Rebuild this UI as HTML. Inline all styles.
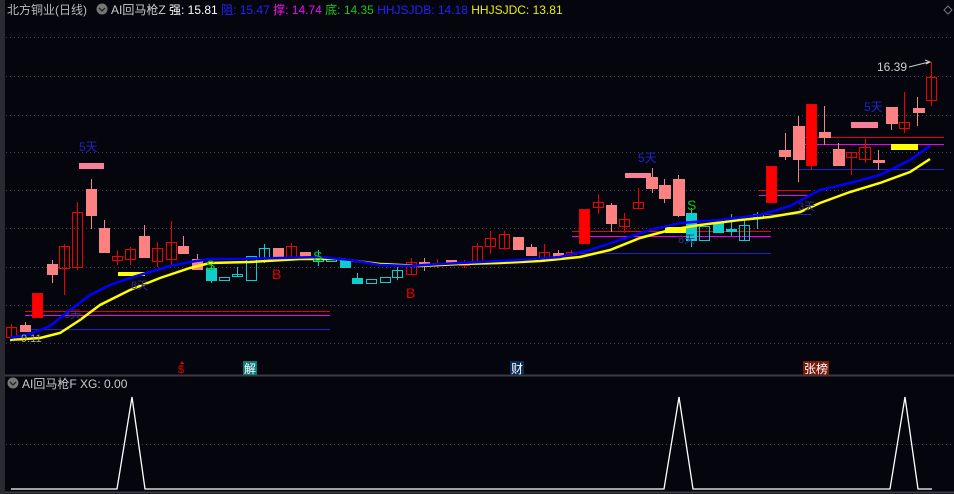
<!DOCTYPE html><html><head><meta charset="utf-8"><style>
html,body{margin:0;padding:0;background:#05050d;width:954px;height:494px;overflow:hidden}
svg{display:block}
text{font-family:"Liberation Sans","Noto Sans CJK SC",sans-serif}
</style></head><body>
<svg width="954" height="494" viewBox="0 0 954 494" xmlns="http://www.w3.org/2000/svg">
<rect width="954" height="494" fill="#05050d"/>
<rect x="0" y="0" width="5" height="494" fill="#2a2a30"/>
<g stroke="#444" stroke-width="1" stroke-dasharray="1,3">
<line x1="6" y1="37.5" x2="954" y2="37.5"/><line x1="6" y1="76.5" x2="954" y2="76.5"/>
<line x1="6" y1="115.5" x2="954" y2="115.5"/><line x1="6" y1="152.5" x2="954" y2="152.5"/>
<line x1="6" y1="190.5" x2="954" y2="190.5"/><line x1="6" y1="228.5" x2="954" y2="228.5"/>
<line x1="6" y1="267.5" x2="954" y2="267.5"/><line x1="6" y1="305.5" x2="954" y2="305.5"/>
<line x1="6" y1="343.5" x2="954" y2="343.5"/><line x1="6" y1="444.5" x2="954" y2="444.5"/>
</g>
<line x1="5" y1="375.5" x2="954" y2="375.5" stroke="#3a3a40" stroke-width="2"/>
<line x1="5" y1="492.5" x2="954" y2="492.5" stroke="#3a3a40" stroke-width="2"/>
<!-- horizontal level lines -->
<g stroke-width="1">
<line x1="25" y1="311.5" x2="330" y2="311.5" stroke="#e00"/><line x1="25" y1="315.5" x2="330" y2="315.5" stroke="#e0e"/><line x1="25" y1="329.5" x2="330" y2="329.5" stroke="#22c"/>
<line x1="572" y1="231.5" x2="771" y2="231.5" stroke="#e00"/><line x1="572" y1="236.5" x2="771" y2="236.5" stroke="#e0e"/><line x1="572" y1="253.5" x2="771" y2="253.5" stroke="#22c"/>
<line x1="759" y1="190.5" x2="811" y2="190.5" stroke="#e00"/><line x1="759" y1="195.5" x2="811" y2="195.5" stroke="#e0e"/><line x1="755" y1="214.5" x2="811" y2="214.5" stroke="#22c"/>
<line x1="799" y1="137.5" x2="944" y2="137.5" stroke="#e00"/><line x1="799" y1="144.5" x2="944" y2="144.5" stroke="#e0e"/><line x1="799" y1="169.5" x2="944" y2="169.5" stroke="#22c"/>
</g>
<!-- bars -->
<rect x="118" y="272" width="27" height="4" fill="#ff0"/>
<rect x="665" y="227" width="26" height="6" fill="#ff0"/>
<rect x="891" y="144" width="27" height="6" fill="#ff0"/>
<rect x="79" y="163" width="25" height="6" fill="#f77f99"/>
<rect x="625" y="173" width="26" height="5" fill="#f77f99"/>
<rect x="851" y="122" width="27" height="6" fill="#f77f99"/>
<!-- candles -->
<g stroke-width="1">
<g stroke="#e00" fill="none">
<line x1="11.5" y1="324" x2="11.5" y2="337"/><rect x="6.5" y="327.5" width="10" height="10"/>
<line x1="64.5" y1="244" x2="64.5" y2="295"/><rect x="59.5" y="246.5" width="10" height="22"/>
<line x1="77.5" y1="202" x2="77.5" y2="270"/><rect x="72.5" y="212.5" width="10" height="55"/>
<line x1="117.5" y1="250" x2="117.5" y2="265"/><rect x="112.5" y="256.5" width="10" height="4"/>
<line x1="130.5" y1="247" x2="130.5" y2="265"/><rect x="125.5" y="249.5" width="10" height="10"/>
<line x1="157.5" y1="242" x2="157.5" y2="267"/><rect x="152.5" y="248.5" width="10" height="13"/>
<line x1="171.5" y1="221" x2="171.5" y2="266"/><rect x="166.5" y="242.5" width="10" height="17"/>
<line x1="291.5" y1="243" x2="291.5" y2="259"/><rect x="286.5" y="246.5" width="10" height="11"/>
<line x1="411.5" y1="258" x2="411.5" y2="274"/><rect x="406.5" y="262.5" width="10" height="12"/>
<line x1="437.5" y1="259" x2="437.5" y2="268"/><rect x="432.5" y="263.5" width="10" height="2"/>
<line x1="464.5" y1="260" x2="464.5" y2="268"/><rect x="459.5" y="263.5" width="10" height="2"/>
<line x1="477.5" y1="243" x2="477.5" y2="264"/><rect x="472.5" y="246.5" width="10" height="15"/>
<line x1="490.5" y1="231" x2="490.5" y2="254"/><rect x="485.5" y="238.5" width="10" height="8"/>
<line x1="504.5" y1="231" x2="504.5" y2="249"/><rect x="499.5" y="234.5" width="10" height="14"/>
<line x1="544.5" y1="244" x2="544.5" y2="262"/><rect x="539.5" y="252.5" width="10" height="6"/>
<line x1="571.5" y1="250" x2="571.5" y2="256"/><rect x="566.5" y="252.5" width="10" height="2"/>
<line x1="598.5" y1="194" x2="598.5" y2="214"/><rect x="593.5" y="202.5" width="10" height="5"/>
<line x1="624.5" y1="213" x2="624.5" y2="233"/><rect x="619.5" y="219.5" width="10" height="7"/>
<line x1="638.5" y1="188" x2="638.5" y2="209"/><rect x="633.5" y="202.5" width="10" height="6"/>
<line x1="851.5" y1="152" x2="851.5" y2="175"/><rect x="846.5" y="152.5" width="10" height="5"/>
<line x1="865.5" y1="139" x2="865.5" y2="163"/><rect x="859.5" y="147.5" width="11" height="12"/>
<line x1="904.5" y1="92" x2="904.5" y2="133"/><rect x="899.5" y="122.5" width="10" height="6"/>
<line x1="931.5" y1="62" x2="931.5" y2="106"/><rect x="926.5" y="77.5" width="10" height="23"/>
</g>
<g stroke="#e00" fill="#f00">
<rect x="32.5" y="293.5" width="10" height="24"/>
<rect x="579.5" y="209.5" width="10" height="34"/>
<rect x="766.5" y="166.5" width="10" height="36"/>
<line x1="811.5" y1="104" x2="811.5" y2="170"/><rect x="806.5" y="104.5" width="10" height="61"/>
</g>
<g stroke="#e88" fill="#ff8080">
<line x1="25.5" y1="322" x2="25.5" y2="331"/><rect x="20.5" y="325.5" width="10" height="6"/>
<line x1="52.5" y1="260" x2="52.5" y2="283"/><rect x="47.5" y="264.5" width="10" height="10"/>
<line x1="91.5" y1="179" x2="91.5" y2="229"/><rect x="86.5" y="189.5" width="10" height="26"/>
<line x1="104.5" y1="220" x2="104.5" y2="253"/><rect x="99.5" y="228.5" width="10" height="24"/>
<line x1="144.5" y1="225" x2="144.5" y2="257"/><rect x="139.5" y="236.5" width="10" height="21"/>
<line x1="183.5" y1="236" x2="183.5" y2="253"/><rect x="178.5" y="246.5" width="10" height="7"/>
<line x1="197.5" y1="254" x2="197.5" y2="268"/><rect x="192.5" y="259.5" width="10" height="10"/>
<rect x="273.5" y="248.5" width="10" height="8"/>
<rect x="300.5" y="252.5" width="10" height="4"/>
<line x1="424.5" y1="258" x2="424.5" y2="271"/><rect x="419.5" y="262.5" width="10" height="3"/>
<rect x="446.5" y="260.5" width="10" height="4"/>
<rect x="513.5" y="237.5" width="10" height="12"/>
<line x1="531.5" y1="244" x2="531.5" y2="255"/><rect x="526.5" y="247.5" width="10" height="8"/>
<line x1="558.5" y1="250" x2="558.5" y2="260"/><rect x="553.5" y="253.5" width="10" height="3"/>
<line x1="611.5" y1="203" x2="611.5" y2="232"/><rect x="606.5" y="205.5" width="10" height="18"/>
<line x1="652.5" y1="168" x2="652.5" y2="193"/><rect x="646.5" y="177.5" width="11" height="11"/>
<line x1="664.5" y1="179" x2="664.5" y2="203"/><rect x="659.5" y="185.5" width="11" height="13"/>
<line x1="678.5" y1="175" x2="678.5" y2="217"/><rect x="673.5" y="179.5" width="11" height="36"/>
<line x1="785.5" y1="133" x2="785.5" y2="160"/><rect x="779.5" y="150.5" width="11" height="6"/>
<line x1="798.5" y1="116" x2="798.5" y2="182"/><rect x="793.5" y="126.5" width="11" height="33"/>
<line x1="824.5" y1="106" x2="824.5" y2="145"/><rect x="819.5" y="132.5" width="11" height="5"/>
<line x1="838.5" y1="143" x2="838.5" y2="166"/><rect x="833.5" y="149.5" width="11" height="16"/>
<line x1="878.5" y1="150" x2="878.5" y2="170"/><rect x="873.5" y="160.5" width="11" height="2"/>
<line x1="891.5" y1="107" x2="891.5" y2="130"/><rect x="886.5" y="107.5" width="11" height="16"/>
<line x1="917.5" y1="97" x2="917.5" y2="126"/><rect x="913.5" y="108.5" width="11" height="4"/>
</g>
<g stroke="#1cc" fill="none">
<rect x="219.5" y="277.5" width="10" height="3"/>
<line x1="237.5" y1="267" x2="237.5" y2="276"/><rect x="232.5" y="274.5" width="10" height="2"/>
<rect x="246.5" y="256.5" width="10" height="24"/>
<line x1="264.5" y1="244" x2="264.5" y2="263"/><rect x="259.5" y="248.5" width="10" height="10"/>
<line x1="318.5" y1="250" x2="318.5" y2="266"/><rect x="313.5" y="258.5" width="10" height="3"/>
<rect x="326.5" y="258.5" width="10" height="3"/>
<rect x="366.5" y="279.5" width="10" height="4"/>
<rect x="380.5" y="277.5" width="10" height="5"/>
<line x1="397.5" y1="267" x2="397.5" y2="280"/><rect x="392.5" y="270.5" width="10" height="7"/>
<rect x="699.5" y="226.5" width="10" height="14"/>
<line x1="731.5" y1="214" x2="731.5" y2="236"/>
<line x1="744.5" y1="220" x2="744.5" y2="241"/><rect x="739.5" y="225.5" width="10" height="15"/>
<line x1="757.5" y1="212" x2="757.5" y2="229"/><rect x="753.5" y="214.5" width="10" height="3"/>
</g>
<g stroke="#1cc" fill="#1cc">
<line x1="211.5" y1="262" x2="211.5" y2="283"/><rect x="206.5" y="268.5" width="10" height="12"/>
<rect x="340.5" y="260.5" width="10" height="7"/>
<line x1="357.5" y1="273" x2="357.5" y2="283"/><rect x="352.5" y="278.5" width="10" height="5"/>
<line x1="691.5" y1="208" x2="691.5" y2="247"/><rect x="686.5" y="213.5" width="10" height="27"/>
<rect x="713.5" y="223.5" width="10" height="9"/>
<rect x="726.5" y="229.5" width="10" height="2"/>
</g>
</g>
<!-- MA lines -->
<polyline fill="none" stroke="#ff0" stroke-width="2.5" points="10,340 40,338 60,333 80,320 100,305 130,290 160,278 190,268 210,263 250,262 300,259 340,259 380,264 420,266 460,264 500,263 540,261 580,257 610,250 640,238 670,230 700,225 740,220 770,217 800,212 820,203 850,192 880,183 910,172 930,159"/>
<polyline fill="none" stroke="#00f" stroke-width="2.5" points="10,338 30,334 50,326 70,310 90,295 110,285 130,278 150,272 170,266 190,262 210,259 240,259 280,258 320,257 350,260 380,265 410,266 440,264 480,262 520,260 560,257 590,250 620,240 650,230 680,223 720,220 760,215 790,206 820,190 850,183 880,175 910,160 930,146"/>
<!-- labels -->
<g font-size="12" fill="#22c">
<text x="79" y="151">5天</text><text x="638" y="162">5天</text><text x="864" y="111">5天</text>
<text x="131" y="289" fill="#338" font-size="11">8天</text><text x="678" y="243" fill="#338" font-size="11">8天</text>
<text x="64" y="318" fill="#338" font-size="11">3天</text><text x="798" y="210" fill="#338" font-size="11">3天</text>
</g>
<g font-size="14" fill="#0c0"><text x="206" y="270">S</text><text x="313" y="261">S</text><text x="687" y="210">S</text></g>
<g font-size="14" fill="#e00"><text x="272" y="279">B</text><text x="406" y="298">B</text></g>
<text x="10" y="342" font-size="11" fill="#aaa">←9.11</text>
<text x="877" y="71" font-size="12" fill="#ccc">16.39</text>
<path d="M909 67 L929 62 M925 60 L930 62 L926 64" stroke="#ccc" fill="none" stroke-width="1"/>
<path d="M948 6 L952 10 L948 14 L944 10Z" stroke="#777" fill="none"/>
<!-- header -->
<text x="7" y="14" font-size="12" fill="#bbb">北方铜业(日线)</text>
<circle cx="102" cy="9" r="5.5" fill="#777"/><path d="M99 8 L102 11 L105 8" stroke="#222" fill="none" stroke-width="1.3"/>
<text x="111" y="14" font-size="12"><tspan fill="#ccc">AI回马枪Z </tspan><tspan fill="#fff">强: 15.81 </tspan><tspan fill="#22f">阻: 15.47 </tspan><tspan fill="#e1e">撑: 14.74 </tspan><tspan fill="#1c1">底: 14.35 </tspan><tspan fill="#22f">HHJSJDB: 14.18 </tspan><tspan fill="#ee0">HHJSJDC: 13.81</tspan></text>
<!-- bottom markers -->
<text x="178" y="373" font-size="11" fill="#e00">$</text><path d="M180 364 L182 361 L184 364Z" fill="#e00"/>
<rect x="243" y="361" width="14" height="14" fill="#0a7a7a"/><text x="244" y="373" font-size="12" fill="#fff">解</text>
<rect x="510" y="361" width="14" height="14" fill="#0c2a5a"/><text x="511" y="373" font-size="12" fill="#fff">财</text>
<rect x="803" y="361" width="26" height="14" fill="#7a1a0a"/><text x="804" y="373" font-size="12" fill="#fff">张榜</text>
<!-- sub panel -->
<circle cx="13" cy="383" r="5.5" fill="#777"/><path d="M10 382 L13 385 L16 382" stroke="#222" fill="none" stroke-width="1.3"/>
<text x="22" y="388" font-size="12" fill="#ccc">AI回马枪F  XG: 0.00</text>
<polyline fill="none" stroke="#fff" stroke-width="1.3" points="11,489 117,489 132,397 145,489 664,489 679,397 693,489 890,489 905,397 918,489 932,489"/>
</svg>
</body></html>
